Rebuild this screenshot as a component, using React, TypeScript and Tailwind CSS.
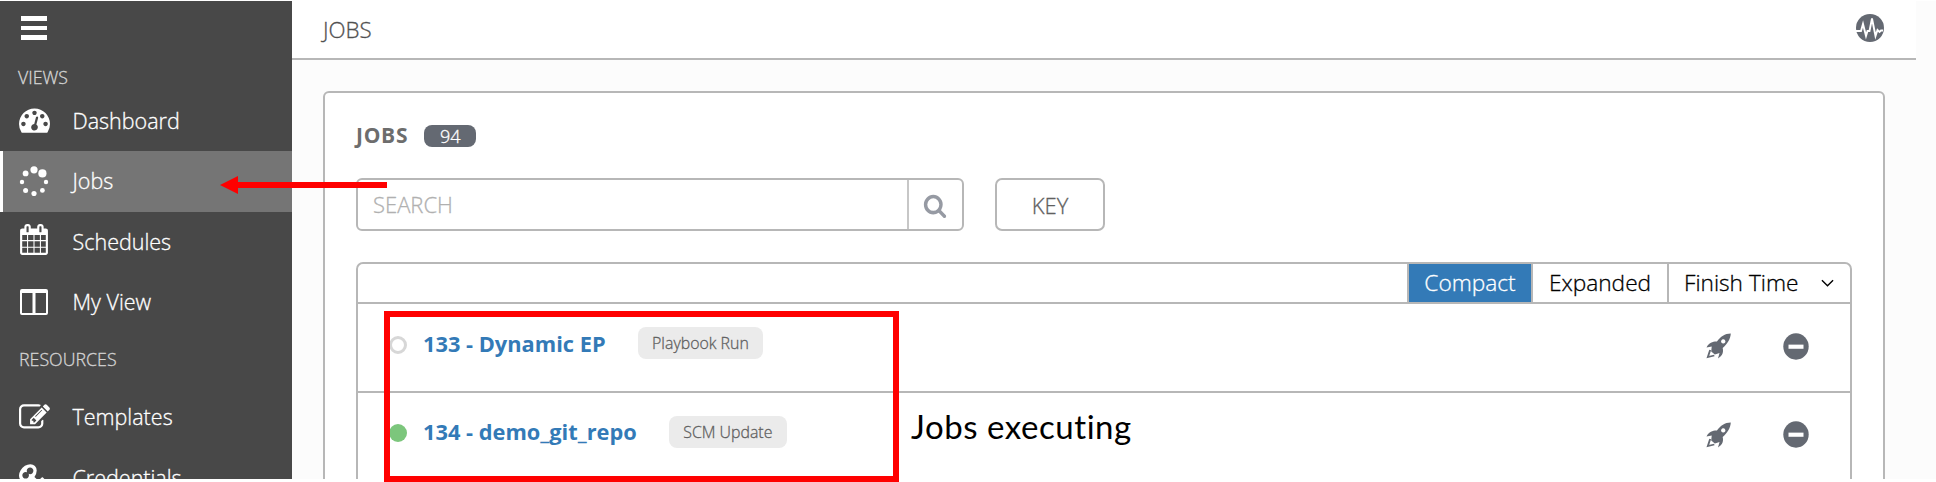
import React from 'react';

const Icon = ({ d, className }: { d: string; className: string }) => (
  <svg viewBox="0 0 1792 1792" preserveAspectRatio="none" fill="currentColor" className={className}><path d={d} /></svg>
);

const GAUGE = 'M384 1152q0-53-37.5-90.5t-90.5-37.5-90.5 37.5-37.5 90.5 37.5 90.5 90.5 37.5 90.5-37.5 37.5-90.5zm192-448q0-53-37.5-90.5t-90.5-37.5-90.5 37.5-37.5 90.5 37.5 90.5 90.5 37.5 90.5-37.5 37.5-90.5zm428 481l101-382q6-26-7.5-48.5t-38.5-29.5-48 6.5-30 39.5l-101 382q-60 5-107 43.5t-63 98.5q-20 77 20 146t117 89 146-20 89-117q16-60-6-117t-72-91zm660-33q0-53-37.5-90.5t-90.5-37.5-90.5 37.5-37.5 90.5 37.5 90.5 90.5 37.5 90.5-37.5 37.5-90.5zm-640-640q0-53-37.5-90.5t-90.5-37.5-90.5 37.5-37.5 90.5 37.5 90.5 90.5 37.5 90.5-37.5 37.5-90.5zm448 192q0-53-37.5-90.5t-90.5-37.5-90.5 37.5-37.5 90.5 37.5 90.5 90.5 37.5 90.5-37.5 37.5-90.5zm320 448q0 261-141 483-19 29-54 29h-1402q-35 0-54-29-141-221-141-483 0-182 71-348t191-286 286-191 348-71 348 71 286 191 191 286 71 348z';
const CALENDAR = 'M192 1664h288v-288h-288v288zm352 0h320v-288h-320v288zm-352-352h288v-320h-288v320zm352 0h320v-320h-320v320zm-352-384h288v-288h-288v288zm736 736h320v-288h-320v288zm-384-736h320v-288h-320v288zm768 736h288v-288h-288v288zm-384-352h320v-320h-320v320zm-352-864v-288q0-13-9.5-22.5t-22.5-9.5h-64q-13 0-22.5 9.5t-9.5 22.5v288q0 13 9.5 22.5t22.5 9.5h64q13 0 22.5-9.5t9.5-22.5zm736 864h288v-320h-288v320zm-384-384h320v-288h-320v288zm384 0h288v-288h-288v288zm32-480v-288q0-13-9.5-22.5t-22.5-9.5h-64q-13 0-22.5 9.5t-9.5 22.5v288q0 13 9.5 22.5t22.5 9.5h64q13 0 22.5-9.5t9.5-22.5zm384-64v1280q0 52-38 90t-90 38h-1408q-52 0-90-38t-38-90v-1280q0-52 38-90t90-38h128v-96q0-66 47-113t113-47h64q66 0 113 47t47 113v96h384v-96q0-66 47-113t113-47h64q66 0 113 47t47 113v96h128q52 0 90 38t38 90z';
const EDIT = 'M888 1184l116-116-152-152-116 116v56h96v96h56zm440-720q-16-16-33 1l-350 350q-17 17-1 33t33-1l350-350q17-17 1-33zm80 594v190q0 119-84.5 203.5t-203.5 84.5h-832q-119 0-203.5-84.5t-84.5-203.5v-832q0-119 84.5-203.5t203.5-84.5h832q63 0 117 25 15 7 18 23 3 17-9 29l-49 49q-14 14-32 8-23-6-45-6h-832q-66 0-113 47t-47 113v832q0 66 47 113t113 47h832q66 0 113-47t47-113v-126q0-13 9-22l64-64q15-15 35-7t20 29zm-96-738l288 288-672 672h-288v-288zm444 132l-92 92-288-288 92-92q28-28 68-28t68 28l152 152q28 28 28 68t-28 68z';
const SEARCH = 'M1216 832q0-185-131.5-316.5t-316.5-131.5-316.5 131.5-131.5 316.5 131.5 316.5 316.5 131.5 316.5-131.5 131.5-316.5zm512 832q0 52-38 90t-90 38q-54 0-90-38l-343-342q-179 124-399 124-143 0-273.5-55.5t-225-150-150-225-55.5-273.5 55.5-273.5 150-225 225-150 273.5-55.5 273.5 55.5 225 150 150 225 55.5 273.5q0 220-124 399l343 343q37 37 37 90z';
const KEY = 'M832 512q0-80-56-136t-136-56-136 56-56 136q0 42 19 83-41-19-83-19-80 0-136 56t-56 136 56 136 136 56 136-56 56-136q0-42-19-83 41 19 83 19 80 0 136-56t56-136zm851 704q0 17-49 66t-66 49q-9 0-28.5-16t-36.5-33-38.5-40-24.5-26l-96 96 220 220q28 28 28 68 0 42-39 81t-81 39q-40 0-68-28l-671-671q-176 131-365 131-163 0-265.5-102.5t-102.5-265.5q0-160 95-313t248-248 313-95q163 0 265.5 102.5t102.5 265.5q0 189-131 365l355 355 96-96q-3-3-26-24.5t-40-38.5-33-36.5-16-28.5q0-17 49-66t66-49q13 0 23 10 6 6 46 44.5t82 79.5 86.5 86 73 78 28.5 41z';

const Spinner = () => (
  <svg viewBox="0 0 30 30" fill="currentColor" className="h-[30px] w-[30px]">
    <circle cx="15" cy="3.8" r="3.6" /><circle cx="23.4" cy="7.4" r="4.1" /><circle cx="27" cy="16" r="2.2" />
    <circle cx="23.4" cy="24.4" r="2.4" /><circle cx="15" cy="27.6" r="2.6" /><circle cx="6.6" cy="24.4" r="2.5" />
    <circle cx="3" cy="16" r="2.2" /><circle cx="6.6" cy="7.4" r="2.9" />
  </svg>
);
const Columns = () => (
  <svg viewBox="0 0 28 26" className="h-[26px] w-7" fill="none" stroke="currentColor" strokeWidth="2">
    <rect x="1" y="1" width="26" height="24" rx="1" /><path d="M1 2.5h26M14 2v23" strokeWidth="3" />
  </svg>
);

const NavItem = ({ label, icon, active }: { label: string; icon: React.ReactNode; active?: boolean }) => (
  <div className={`flex h-[60.3px] shrink-0 items-center ${active ? 'border-l-[3px] border-white bg-[#757575] pl-[15px]' : 'pl-[18px]'}`}>
    <span className="flex w-8 justify-center">{icon}</span>
    <span className="ml-[22.5px] text-[21.5px] leading-[30px]">{label}</span>
  </div>
);

const Rocket = () => (
  <svg viewBox="0 0 24 26" preserveAspectRatio="none" className="h-[26px] w-[25px]" fill="currentColor">
    <path fillRule="evenodd" d="M23.8.5C18 .6 14 3.5 10.5 8.5 6.5 8.4 3 9.5.5 14.5L5.5 13.5 5 18.5 8.5 21.5 13 20 11.5 25.5C16 22.5 17 19 16 15 20.5 11 23.5 6 23.8.5ZM16.5 6.3a2.1 2.1 0 1 0 .1 0Z" />
    <path d="M4 17L1.8 24 8 22.5" fill="none" stroke="currentColor" strokeWidth="1.8" />
  </svg>
);

const JobRow = ({ name, kind, running }: { name: string; kind: string; running?: boolean }) => (
  <div className="flex h-[88.5px] shrink-0 items-start border-b-2 border-[#b7b7b7] pl-[31px] pr-[41px] pt-[21.5px]">
    <span className={`mt-[10px] h-[18px] w-[18px] rounded-full ${running ? 'bg-[#7cc67c]' : 'border-[3px] border-[#d7d7d7]'}`} />
    <span className="ml-4 mt-[3px] text-[21.8px] font-bold leading-[30px] text-[#337ab7] [-webkit-text-stroke:0px]">{name}</span>
    <span className="ml-8 mt-[1.5px] flex h-8 items-center rounded-lg bg-[#ebebeb] px-[14.5px] pt-0.5 text-[15.9px] text-[#606060]">{kind}</span>
    <span className="ml-auto mt-[7px] flex items-center gap-[52px] text-[#646972]">
      <Rocket />
      <svg viewBox="0 0 26 26" preserveAspectRatio="none" className="h-[27px] w-[26px]"><circle cx="13" cy="13" r="12.7" fill="currentColor" /><path d="M5.5 13.2h15" stroke="white" strokeWidth="4" /></svg>
    </span>
  </div>
);

export default function App() {
  return (
    <div className="relative flex h-[482px] w-[1936px] overflow-hidden bg-white pb-[3px] pt-px font-['Open_Sans',sans-serif] font-light [-webkit-text-stroke:0.3px]">
      <aside className="flex w-[292px] shrink-0 flex-col overflow-hidden bg-[#484848] text-white">
        <div className="flex h-[53px] shrink-0 flex-col justify-center gap-[5px] pl-[21px]">
          <i className="h-[5px] w-[26px] bg-white" /><i className="h-[4px] w-[26px] bg-white" /><i className="h-[5px] w-[26px] bg-white" />
        </div>
        <div className="flex h-[37px] shrink-0 items-end pb-[2px] pl-[18px] text-[17.7px] leading-6 text-[#d5d5d5]">VIEWS</div>
        <NavItem label="Dashboard" icon={<Icon d={GAUGE} className="mb-1 h-[31px] w-[31px]" />} />
        <NavItem label="Jobs" icon={<Spinner />} active />
        <NavItem label="Schedules" icon={<Icon d={CALENDAR} className="mb-1 h-[31px] w-[30px]" />} />
        <NavItem label="My View" icon={<Columns />} />
        <div className="flex h-[55px] shrink-0 items-center pl-[19px] text-[17.8px] text-[#d5d5d5]">RESOURCES</div>
        <NavItem label="Templates" icon={<Icon d={EDIT} className="h-[31px] w-[31px]" />} />
        <NavItem label="Credentials" icon={<Icon d={KEY} className="h-[31px] w-[31px]" />} />
      </aside>

      <main className="flex min-w-0 flex-1 flex-col overflow-hidden bg-[#fcfcfc]">
        <header className="mr-5 flex h-[59px] shrink-0 items-center justify-between border-b-2 border-[#b7b7b7] bg-white pl-[31px] pr-8 text-[22.3px] text-[#505050]">
          <span className="pt-px">JOBS</span>
          <svg viewBox="0 0 28 28" className="mb-[3px] h-7 w-7"><circle cx="14" cy="14" r="14" fill="#646972" /><path d="M0 17h5l2-7 3 12 1.5-5h2l2.5-12.5 3.5 17.5 2-6 2 2 1.5-1.5h2" fill="none" stroke="white" strokeWidth="1.9" /></svg>
        </header>
        <section className="ml-[31px] mr-[51px] mt-[31px] h-[500px] shrink-0 rounded-t-[6px] border-2 border-[#b7b7b7] bg-white px-[31px] pt-[29px]">
          <div className="flex h-[28px] items-center gap-[16px]">
            <h1 className="text-[21px] font-bold tracking-[0.7px] text-[#6d6d6d] [-webkit-text-stroke:0px]">JOBS</h1>
            <span className="flex h-[22px] w-[52px] items-center justify-center rounded-[8px] bg-[#646972] pt-px text-[18px] text-white">94</span>
          </div>
          <div className="mt-[28px] flex h-[53px] gap-[31px]">
            <div className="flex w-[608px] rounded-[6px] border-2 border-[#b7b7b7]">
              <div className="flex flex-1 items-center pl-[15px] text-[22px] text-[#b0b0b0]">SEARCH</div>
              <div className="flex w-[55px] items-center justify-center border-l-2 border-[#c7c7c7] pr-0.5 pt-0.5 text-[#969aa3]"><Icon d={SEARCH} className="h-[25px] w-[24px]" /></div>
            </div>
            <button className="w-[110px] rounded-[7px] border-2 border-[#b7b7b7] pt-px text-[22px] text-[#606060]">KEY</button>
          </div>
          <div className="mt-[31px] h-[260px] rounded-t-[7px] border-2 border-[#b7b7b7]">
            <div className="flex h-[40px] justify-end border-b-2 border-[#b7b7b7] text-[22.7px] text-black">
              <div className="flex w-[124px] items-center justify-center border-l-2 border-[#b7b7b7] bg-[#337ab7] text-white">Compact</div>
              <div className="flex w-[136px] items-center justify-center border-l-2 border-[#b7b7b7]">Expanded</div>
              <div className="flex w-[183px] items-center justify-between border-l-2 border-[#b7b7b7] pl-[15px] pr-4">Finish Time
                <svg viewBox="0 0 14 8" className="h-2 w-[13px]" fill="none" stroke="currentColor" strokeWidth="1.5"><path d="M1 1l6 6 6-6" /></svg>
              </div>
            </div>
            <JobRow name="133 - Dynamic EP" kind="Playbook Run" />
            <JobRow name="134 - demo_git_repo" kind="SCM Update" running />
          </div>
        </section>
      </main>

      <div className="absolute left-[384px] top-[311px] h-[171px] w-[515px] border-[6px] border-[#ff0000]" />
      <div className="absolute left-[911px] top-[403px] whitespace-nowrap font-['Lato',sans-serif] text-[33px] font-normal leading-[46px] tracking-[0.55px] text-black [-webkit-text-stroke:0px]">Jobs executing</div>
      <svg viewBox="0 0 167 18" className="absolute left-[220px] top-[176px] h-[18px] w-[167px]" fill="#ff0000"><path d="M0 9L18 0v6h149v6H18v6z" /></svg>
    </div>
  );
}
